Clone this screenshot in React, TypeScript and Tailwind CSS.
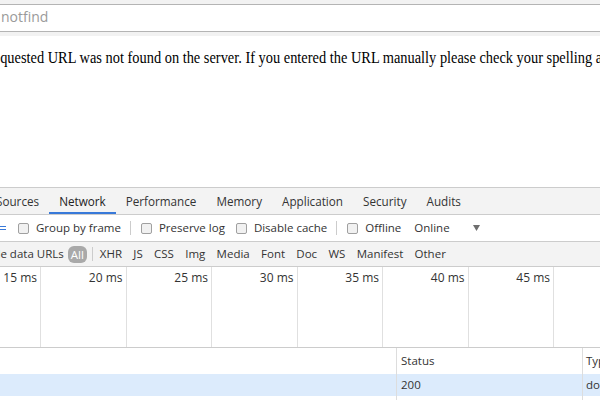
import React from 'react';

const tabs = ['Sources', 'Network', 'Performance', 'Memory', 'Application', 'Security', 'Audits'];
const filters = ['XHR', 'JS', 'CSS', 'Img', 'Media', 'Font', 'Doc', 'WS', 'Manifest', 'Other'];
const ticks = ['15 ms', '20 ms', '25 ms', '30 ms', '35 ms', '40 ms', '45 ms', ''];

const Checkbox: React.FC<{ label: string; className?: string }> = ({ label, className = '' }) => (
  <div className={`flex items-center ${className}`}>
    <span className="w-[11px] h-[11px] rounded-[2px] border border-[#a0a0a0] bg-[#f1f1f1] shrink-0" />
    <span className="ml-[7px]">{label}</span>
  </div>
);

const Sep: React.FC<{ className?: string }> = ({ className = '' }) => (
  <span className={`w-px h-[14px] bg-[#ccc] shrink-0 ${className}`} />
);

const App: React.FC = () => {
  return (
    <div className="w-[600px] h-[400px] overflow-hidden bg-white flex flex-col font-['Open_Sans',sans-serif] text-[11.5px] leading-[14px] text-[#333]">
      {/* address strip */}
      <div className="h-[36px] shrink-0 bg-[#f2f2f2] pt-[4px]">
        <div className="h-[28px] border-y border-[#b4b4b4] bg-white flex items-center pb-[2px]">
          <span className="ml-[1px] text-[14px] leading-[16px] text-[#9a9a9a]">notfind</span>
        </div>
      </div>

      {/* page content */}
      <div className="h-[151px] shrink-0 overflow-hidden pt-[11px]">
        <p className="-ml-[37px] whitespace-nowrap font-['Liberation_Serif',serif] text-[14.4px] leading-[18px] text-black origin-top scale-y-[1.12]">
          The requested URL was not found on the server. If you entered the URL manually please check your spelling and try again.
        </p>
      </div>

      {/* devtools */}
      <div className="flex-1 flex flex-col border-t border-[#ccc] overflow-hidden">
        <div className="h-[27px] shrink-0 bg-[#f3f3f3] border-b border-[#ccc] flex -ml-[14px] text-[11.7px]">
          {tabs.map((t) => (
            <div
              key={t}
              className={`px-[10px] flex items-center whitespace-nowrap ${
                t === 'Network' ? 'border-b-2 border-[#3879d9] pt-[2px] text-[#222]' : 'text-[#333]'
              }`}
            >
              {t}
            </div>
          ))}
        </div>

        <div className="h-[27px] shrink-0 bg-white border-b border-[#ccc] flex items-center whitespace-nowrap">
          <span className="w-[6px] flex flex-col gap-[2px] self-center">
            <span className="h-px bg-[#3879d9]" />
            <span className="h-px bg-[#3879d9]" />
          </span>
          <Checkbox label="Group by frame" className="ml-[12px]" />
          <Sep className="ml-[9px]" />
          <Checkbox label="Preserve log" className="ml-[10px]" />
          <Checkbox label="Disable cache" className="ml-[11px]" />
          <Sep className="ml-[9px]" />
          <Checkbox label="Offline" className="ml-[10px]" />
          <span className="ml-[13px]">Online</span>
          <svg width="7" height="6" viewBox="0 0 7 6" className="ml-[23px]">
            <polygon points="0,0 7,0 3.5,6" fill="#6e6e6e" />
          </svg>
        </div>

        <div className="h-[25px] shrink-0 bg-[#f3f3f3] border-b border-[#ccc] flex items-center whitespace-nowrap">
          <span className="-ml-[18px]">Hide data URLs</span>
          <span className="ml-[4px] px-[3px] rounded-[6px] bg-[#a9a9a9] text-white leading-[17px]">All</span>
          <Sep className="ml-[5px]" />
          <div className="flex gap-[7.3px] ml-[5px]">
            {filters.map((f) => (
              <span key={f} className="px-[2px]">
                {f}
              </span>
            ))}
          </div>
        </div>

        <div className="h-[81px] shrink-0 border-b border-[#ccc] flex text-[12px]">
          {ticks.map((t, i) => (
            <div
              key={i}
              className={`shrink-0 h-full border-r border-[#e0e0e0] text-right pr-[3px] pt-[4px] ${
                i === 0 ? 'w-[41px]' : 'w-[85.5px]'
              }`}
            >
              {t}
            </div>
          ))}
        </div>

        <div className="flex-1 flex flex-col">
          <div className="h-[26px] shrink-0 flex">
            <div className="w-[397px] shrink-0 border-r border-[#ddd]" />
            <div className="w-[186px] shrink-0 border-r border-[#ddd] flex items-center pl-[4px]">Status</div>
            <div className="flex-1 flex items-center pl-[3px]">Type</div>
          </div>
          <div className="h-[22px] shrink-0 flex bg-[#dcebfc]">
            <div className="w-[397px] shrink-0 border-r border-[#ddd]" />
            <div className="w-[186px] shrink-0 border-r border-[#ddd] flex items-center pl-[4px]">200</div>
            <div className="flex-1 flex items-center pl-[3px]">document</div>
          </div>
          <div className="flex-1 flex">
            <div className="w-[397px] shrink-0 border-r border-[#ddd]" />
            <div className="w-[186px] shrink-0 border-r border-[#ddd]" />
          </div>
        </div>
      </div>
    </div>
  );
};

export default App;
